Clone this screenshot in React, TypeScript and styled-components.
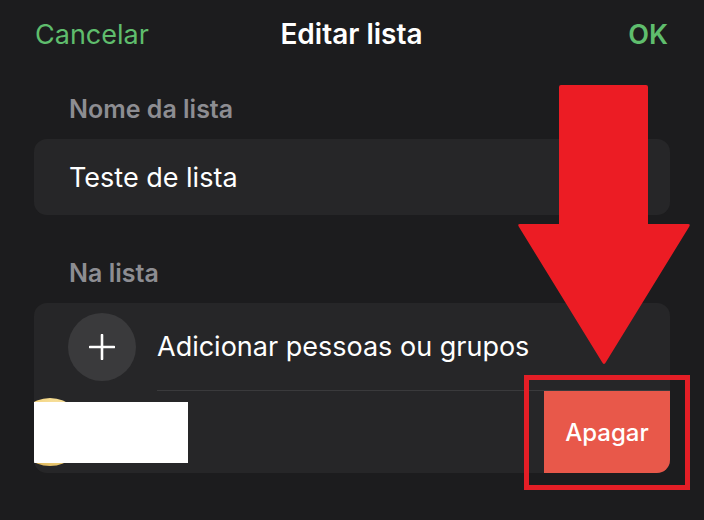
import React from "react";
import styled, { createGlobalStyle } from "styled-components";

const Global = createGlobalStyle`
  html, body { margin: 0; padding: 0; background: #1c1c1e; }
  body { font-family: Inter, "Noto Sans", "Liberation Sans", sans-serif; -webkit-font-smoothing: antialiased; }
`;

const Screen = styled.div`
  position: relative;
  width: 704px;
  height: 520px;
  background: #1c1c1e;
  overflow: hidden;
  display: flex;
  flex-direction: column;
  padding: 0 34px;
  box-sizing: border-box;
`;

const Header = styled.div`
  height: 68px;
  display: grid;
  grid-template-columns: 1fr auto 1fr;
  align-items: center;
  padding: 0 2px 0 1px;
`;

const NavButton = styled.span<{ $bold?: boolean; $end?: boolean }>`
  color: #5fbd6d;
  font-size: 27px;
  font-weight: ${(p) => (p.$bold ? 600 : 400)};
  justify-self: ${(p) => (p.$end ? "end" : "start")};
`;

const Title = styled.span`
  color: #ffffff;
  font-size: 28px;
  font-weight: 600;
`;

const SectionLabel = styled.div<{ $top: number; $height: number }>`
  color: #8d8d92;
  font-size: 25px;
  font-weight: 600;
  padding: ${(p) => p.$top}px 0 0 35px;
  height: ${(p) => p.$height}px;
  box-sizing: border-box;
`;

const Card = styled.div`
  background: #262628;
  border-radius: 13px;
  overflow: hidden;
  display: flex;
  flex-direction: column;
`;

const NameRow = styled.div`
  height: 76px;
  display: flex;
  align-items: center;
  padding-left: 35px;
  color: #ffffff;
  font-size: 27px;
`;

const AddRow = styled.div`
  height: 87px;
  display: flex;
  align-items: center;
  padding-left: 34px;
  gap: 21px;
`;

const PlusCircle = styled.div`
  width: 68px;
  height: 68px;
  border-radius: 50%;
  background: #3a3a3c;
  display: flex;
  align-items: center;
  justify-content: center;
  flex-shrink: 0;
`;

const RowText = styled.span`
  color: #ffffff;
  font-size: 27px;
`;

const Separator = styled.div`
  height: 1px;
  margin-left: 123px;
  background: #3a3a3c;
`;

const SwipeRow = styled.div`
  height: 82px;
  display: flex;
  align-items: stretch;
  justify-content: space-between;
`;

const SwipedContent = styled.div`
  display: flex;
  align-items: center;
  position: relative;
`;

const Avatar = styled.div`
  width: 68px;
  height: 68px;
  border-radius: 50%;
  margin-left: -18px;
  background: radial-gradient(circle at 60% 40%, #fff6d8 0%, #f2d27a 60%, #b88a32 100%);
`;

const Redaction = styled.div`
  position: absolute;
  left: 0;
  top: 11px;
  width: 154px;
  height: 61px;
  background: #ffffff;
`;

const DeleteButton = styled.div`
  width: 126px;
  background: #e8584a;
  color: #ffffff;
  font-size: 24px;
  font-weight: 500;
  display: flex;
  align-items: center;
  justify-content: center;
`;

const Overlay = styled.svg`
  position: absolute;
  left: 0;
  top: 0;
  pointer-events: none;
`;

export default function App() {
  return (
    <>
      <Global />
      <Screen>
        <Header>
          <NavButton>Cancelar</NavButton>
          <Title>Editar lista</Title>
          <NavButton $bold $end>OK</NavButton>
        </Header>
        <SectionLabel $top={26} $height={71}>Nome da lista</SectionLabel>
        <Card>
          <NameRow>Teste de lista</NameRow>
        </Card>
        <SectionLabel $top={43} $height={88}>Na lista</SectionLabel>
        <Card>
          <AddRow>
            <PlusCircle>
              <svg width="26" height="26" viewBox="0 0 26 26">
                <path d="M13 1v24M1 13h24" stroke="#fff" strokeWidth="2.6" strokeLinecap="round" />
              </svg>
            </PlusCircle>
            <RowText>Adicionar pessoas ou grupos</RowText>
          </AddRow>
          <Separator />
          <SwipeRow>
            <SwipedContent>
              <Avatar />
              <Redaction />
            </SwipedContent>
            <DeleteButton>Apagar</DeleteButton>
          </SwipeRow>
        </Card>
        <Overlay width="704" height="520" viewBox="0 0 704 520">
          <path
            d="M561 85 L646 85 Q648 85 648 87 L648 224 L688 224 Q691 224 689 227 L606 362 Q604 366 602 362 L519 227 Q517 224 520 224 L559 224 L559 87 Q559 85 561 85 Z"
            fill="#ec1c24"
          />
          <rect x="526.5" y="377.5" width="161" height="110" fill="none" stroke="#e41e26" strokeWidth="5" />
        </Overlay>
      </Screen>
    </>
  );
}
